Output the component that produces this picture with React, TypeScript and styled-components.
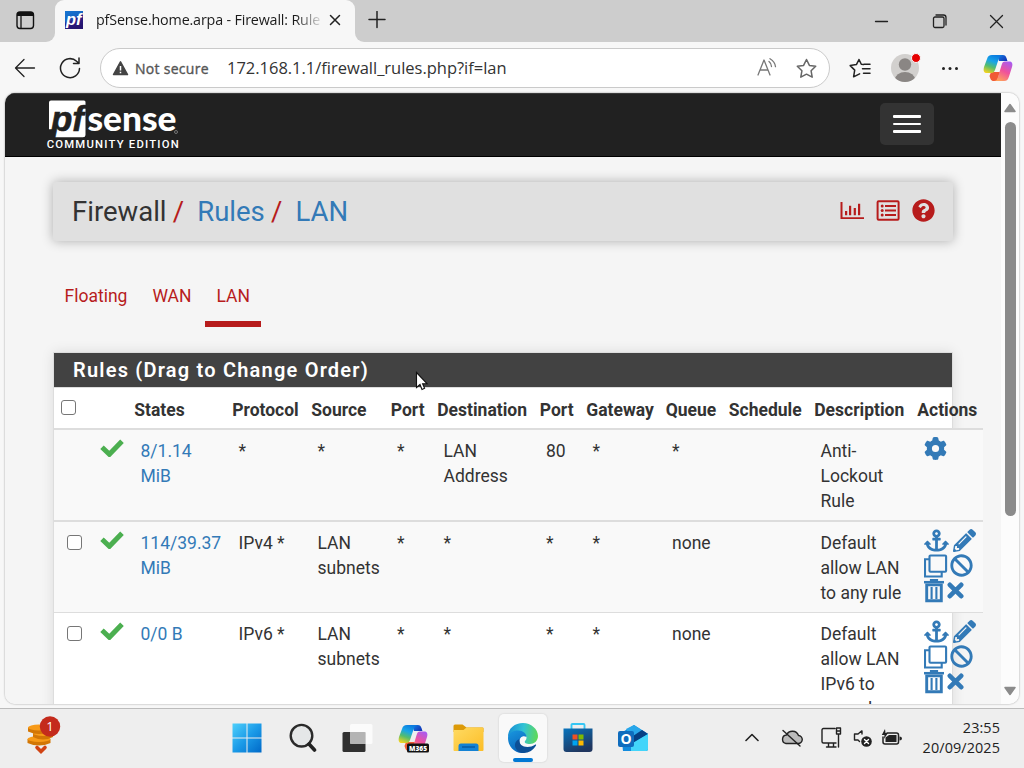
import React from 'react';
import styled, { createGlobalStyle, css } from 'styled-components';
import { FaAnchor, FaBan, FaPencilAlt, FaQuestionCircle } from 'react-icons/fa';
import { FaGear } from 'react-icons/fa6';

const GlobalStyle = createGlobalStyle`
  * { box-sizing: border-box; }
  body { margin: 0; background: #f7f7f7; overflow: hidden; }
`;

const systemFont = css`font-family: 'Open Sans', 'Noto Sans', sans-serif;`;

const Screen = styled.div`
  width: 1024px;
  height: 768px;
  display: flex;
  flex-direction: column;
  overflow: hidden;
  background: #f7f7f7;
  font-family: Roboto, sans-serif;
  color: #212121;
`;

/* ---------- Browser chrome ---------- */

const TabStrip = styled.header`
  flex: none;
  height: 42px;
  display: flex;
  background: #cdcdcd;
  ${systemFont}
`;

const TabMenu = styled.div`
  width: 55px;
  height: 42px;
  padding: 11px 0 0 16px;
  border-bottom-right-radius: 9px;
  background: #cdcdcd;
`;

const TabArea = styled.div<{ $fill?: boolean }>`
  display: flex;
  flex: ${({ $fill }) => ($fill ? '1' : 'none')};
  background: #f7f7f7;
`;

const BrowserTab = styled.div`
  width: 300px;
  height: 42px;
  padding: 0 12px 2px 10px;
  display: flex;
  align-items: center;
  background: #f7f7f7;
  border-radius: 9px 9px 0 0;
`;

const TabCorner = styled.div`
  background: #cdcdcd;
`;

const TabTitle = styled.div`
  width: 224px;
  margin-left: 13px;
  overflow: hidden;
  white-space: nowrap;
  font-size: 14.3px;
  line-height: 20px;
  letter-spacing: -0.16px;
  color: #1b1b1b;
  -webkit-mask-image: linear-gradient(90deg, #000 89%, rgba(0, 0, 0, 0.15) 100%);
  mask-image: linear-gradient(90deg, #000 89%, rgba(0, 0, 0, 0.15) 100%);
`;

const TabSpace = styled.div`
  flex: 1;
  padding: 11px 20px 0 12px;
  display: flex;
  justify-content: space-between;
  background: #cdcdcd;
  border-bottom-left-radius: 9px;
`;

const WindowButtons = styled.div`
  display: flex;
  gap: 42.5px;
  padding-top: 3px;
`;

const Toolbar = styled.div`
  flex: none;
  height: 51px;
  padding: 6px 0 5px 14px;
  display: flex;
  align-items: center;
  ${systemFont}
`;

const ToolIcon = styled.div<{ $gap?: number }>`
  display: flex;
  flex: none;
  margin-left: ${({ $gap = 0 }) => $gap}px;
`;

const AddressBar = styled.div`
  flex: none;
  width: 730px;
  height: 40px;
  margin-left: 19px;
  padding: 0 12px 0 11px;
  display: flex;
  align-items: center;
  background: #fff;
  border: 1px solid #cacaca;
  border-radius: 20px;
`;

const Security = styled.span`
  width: 92px;
  margin-left: 6px;
  white-space: nowrap;
  font-size: 14px;
  letter-spacing: 0.28px;
  -webkit-text-stroke: 0.35px #555;
  color: #555;
`;

const Address = styled.span`
  flex: 1;
  padding-bottom: 2px;
  white-space: nowrap;
  font-size: 16.5px;
  letter-spacing: -0.02px;
  color: #333;
`;

const Avatar = styled.div`
  position: relative;
  display: flex;
  margin-left: 20px;
`;

const AvatarDot = styled.span`
  position: absolute;
  top: -1px;
  right: -2px;
  width: 10px;
  height: 10px;
  border-radius: 50%;
  background: #e60000;
  border: 1px solid #f7f7f7;
`;

/* ---------- Page ---------- */

const Viewport = styled.div`
  flex: none;
  width: 1014px;
  height: 611px;
  margin-left: 5px;
  display: flex;
  overflow: hidden;
  border-radius: 10px;
  background: #fafafa;
  box-shadow: 0 0 2px rgba(0, 0, 0, 0.4);
`;

const Page = styled.main`
  width: 996px;
  height: 611px;
  overflow: hidden;
  background: #f5f5f5;
`;

const ScrollTrack = styled.div`
  width: 18px;
  padding: 10px 3px 8px 3px;
  display: flex;
  flex-direction: column;
  align-items: center;
  background: #fcfcfc;
`;

const ScrollThumb = styled.div`
  width: 11px;
  height: 394px;
  margin: 9px 0 auto;
  border-radius: 6px;
  background: #8b8b8b;
`;

const Navbar = styled.nav`
  height: 64px;
  padding: 5px 67px 0 40px;
  display: flex;
  justify-content: space-between;
  background: #212121;
  border-top: 1px solid #3b3b3b;
  border-bottom: 1px solid #000;
`;

const MenuButton = styled.div`
  width: 54px;
  height: 42px;
  margin-top: 4px;
  display: flex;
  flex-direction: column;
  align-items: center;
  justify-content: center;
  gap: 5px;
  border-radius: 5px;
  background: #333;
`;

const MenuBar = styled.span`
  width: 28px;
  height: 2.6px;
  border-radius: 1px;
  background: #fff;
`;

const Breadcrumb = styled.div`
  width: 900px;
  height: 59px;
  margin: 25px 0 0 48px;
  padding: 0 18px 2px 19px;
  display: flex;
  align-items: center;
  justify-content: space-between;
  background: #e0e0e0;
  border-radius: 3px;
  box-shadow: 0 0 12px rgba(0, 0, 0, 0.3);
`;

const Trail = styled.div`
  display: flex;
  padding-top: 2px;
  font-size: 27.5px;
  line-height: 36px;
`;

const Crumb = styled.span<{ $link?: boolean }>`
  color: ${({ $link }) => ($link ? '#337ab7' : '#333')};
`;

const Slash = styled.span`
  margin: 0 13px 0 6.3px;
  color: #b71c1c;
`;

const PageActions = styled.div`
  display: flex;
  align-items: center;
  gap: 12px;
  color: #b71c1c;
`;

const Tabs = styled.div`
  margin: 38px 0 0 48px;
  display: flex;
`;

const TabLink = styled.div<{ $active?: boolean }>`
  height: 48px;
  padding: 5px 11.5px 0;
  margin-right: 2px;
  border-bottom: 6px solid ${({ $active }) => ($active ? '#b71c1c' : 'transparent')};
  color: #b71c1c;
  font-size: 17.5px;
  line-height: 25px;
`;

const Panel = styled.section`
  width: 900px;
  height: 500px;
  margin: 25px 0 0 48px;
  background: #fff;
  border: 1px solid #ddd;
  box-shadow: 0 0 12px rgba(0, 0, 0, 0.1);
`;

const PanelTitle = styled.h2`
  height: 35px;
  margin: 0;
  padding-left: 19px;
  border-bottom: 1px solid #ddd;
  background: #424242;
  color: #fff;
  font-size: 20px;
  font-weight: 600;
  line-height: 35px;
  letter-spacing: 1.21px;
`;

const rowGrid = css`
  width: 929px;
  display: grid;
  grid-template-columns: 34px 40px 98px 79px 79.5px 46.5px 102.5px 46.5px 79.5px 63px 85.5px 103px 72px;
  font-size: 17.5px;
  line-height: 25px;
`;

const HeadRow = styled.div`
  ${rowGrid}
  height: 42px;
  padding-top: 10px;
  border-bottom: 2px solid #ddd;
  font-weight: 700;
  color: #333;
`;

const HeadCell = styled.div`
  padding-left: 6.25px;
  white-space: nowrap;
`;

const RuleRow = styled.div<{ $shaded?: boolean; $rule: number }>`
  ${rowGrid}
  min-height: ${({ $rule }) => 90 + $rule}px;
  padding-top: 9px;
  background: ${({ $shaded }) => ($shaded ? '#f9f9f9' : 'transparent')};
  border-bottom: ${({ $rule }) => $rule}px solid #ddd;
`;

const Cell = styled.div<{ $link?: boolean }>`
  padding-left: 12.5px;
  color: ${({ $link }) => ($link ? '#337ab7' : '#333')};
`;

const IconCell = styled.div`
  padding-left: 12px;
  color: #4caf50;
`;

const CheckBox = styled.span<{ $head?: boolean }>`
  display: block;
  width: 15px;
  height: 15px;
  margin-top: ${({ $head }) => ($head ? 2 : 4)}px;
  margin-left: ${({ $head }) => ($head ? 0.75 : 0)}px;
  border: 1px solid #767676;
  border-radius: 3px;
  background: #fff;
`;

const ActionList = styled.div`
  padding: 0 0 0 12.5px;
  margin-top: -3px;
  color: #337ab7;
`;

const ActionLine = styled.div<{ $gap: number }>`
  height: 25px;
  display: flex;
  align-items: center;
  gap: ${({ $gap }) => $gap}px;
  white-space: nowrap;
`;

/* ---------- Taskbar ---------- */

const Taskbar = styled.footer`
  flex: none;
  height: 60px;
  margin-top: 4px;
  display: flex;
  align-items: center;
  background: #eee;
  border-top: 1px solid #bcbcbc;
  ${systemFont}
`;

const Widget = styled.div`
  width: 219.5px;
  padding: 0 0 7px 25px;
  display: flex;
`;

const TaskItem = styled.div<{ $active?: boolean }>`
  flex: none;
  width: 48px;
  height: 48px;
  margin: 0 3.6px 1px;
  display: flex;
  align-items: center;
  justify-content: center;
  border-radius: 5px;
  position: relative;
  background: ${({ $active }) => ($active ? '#f9f9f9' : 'transparent')};
  box-shadow: ${({ $active }) => ($active ? '0 0 1px 1px #e2e2e2' : 'none')};
`;

const ActiveMark = styled.span`
  position: absolute;
  left: 14px;
  bottom: 0;
  width: 20px;
  height: 4px;
  border-radius: 2px;
  background: #0078d4;
`;

const Tray = styled.div`
  margin-left: auto;
  padding: 0 24px 2px 0;
  display: flex;
  align-items: center;
`;

const TrayIcon = styled.div<{ $gap?: number }>`
  display: flex;
  margin-left: ${({ $gap = 0 }) => $gap}px;
`;

const Clock = styled.div`
  width: 97px;
  text-align: right;
  font-size: 14.4px;
  line-height: 20px;
  letter-spacing: 0.1px;
  white-space: nowrap;
`;

const Pointer = styled.svg`
  position: absolute;
  left: 415px;
  top: 371px;
`;

/* ---------- Drawings ---------- */

const line = { fill: 'none', stroke: '#222', strokeWidth: 1.3, strokeLinecap: 'round', strokeLinejoin: 'round' } as const;

const CheckIcon = () => (
  <svg width="24" height="18" viewBox="0 0 24 18"><path d="M2 8.2 9.4 15.3 22 2.3" fill="none" stroke="currentColor" strokeWidth="5" /></svg>
);
const ChartIcon = () => (
  <svg width="24" height="19" viewBox="0 0 24 19" fill="currentColor">
    <path d="M.5 1h2v15.2H24V18H.5z" /><path d="M5 10h2.2v4.3H5zM9 4.7h2.2v9.6H9zM13.7 7h2.2v7.3h-2.2zM18 2.7h2.2v11.6H18z" />
  </svg>
);
const ListIcon = () => (
  <svg width="24" height="21" viewBox="0 0 24 21" fill="currentColor">
    <rect x="1.6" y="1.3" width="21" height="18.4" rx="1" fill="none" stroke="currentColor" strokeWidth="2" />
    <circle cx="6.2" cy="6" r="1.5" /><circle cx="6.2" cy="10.5" r="1.5" /><circle cx="6.2" cy="15" r="1.5" />
    <path d="M9 5h11v2H9zM9 9.5h11v2H9zM9 14h11v2H9z" />
  </svg>
);
const CloneIcon = () => (
  <svg width="24" height="24" viewBox="0 0 24 24" fill="none" stroke="currentColor" strokeWidth="2.1">
    <rect x="5.500" y="1.5" width="16.6" height="16.2" rx="1" /><path d="M5 5.200H1V22.500h16.700V18" />
  </svg>
);
const TrashIcon = () => (
  <svg width="20" height="24" viewBox="0 0 20 24" fill="none" stroke="currentColor">
    <path d="M0 3.2h20" strokeWidth="2.5" /><path d="M6.8 2V1h6.4v1" strokeWidth="1.8" />
    <path d="M2.7 5.9h14.600v15.800H2.700z" strokeWidth="2.900" /><path d="M7.600 8v12M12.400 8v12" strokeWidth="2.100" />
  </svg>
);
const CrossIcon = () => (
  <svg width="17" height="17" viewBox="0 0 17 17"><path d="m2.8 2.8 11.4 11.4M14.2 2.8 2.8 14.2" stroke="currentColor" strokeWidth="4.6" strokeLinecap="round" /></svg>
);

const Logo = () => (
  <svg width="140" height="54" viewBox="45 98 140 54" fontFamily="Lato, sans-serif">
    <path d="M51 99.500h33q1.500 0 1.500 1.500V134q0 2.300-2.500 2.300H53l2-8H49V101.500q0-2 2-2z" fill="#fff" />
    <text x="51" y="129.500" fontSize="35" fontWeight="700" fontStyle="italic" fontFamily="Liberation Sans, sans-serif" fill="#212121" stroke="#212121" strokeWidth=".6" textLength="33" lengthAdjust="spacingAndGlyphs">pf</text>
    <text x="87.500" y="129.500" fontSize="35" fontWeight="900" fill="#fff" textLength="89" lengthAdjust="spacingAndGlyphs">sense</text>
    <circle cx="176" cy="131" r="1.500" fill="none" stroke="#aaa" strokeWidth=".6" />
    <text x="46.700" y="147.300" fontSize="11.300" fontWeight="500" fontFamily="Roboto, sans-serif" fill="#fff" textLength="132">COMMUNITY EDITION</text>
  </svg>
);

const Favicon = () => (
  <svg width="18" height="18" viewBox="0 0 18 18">
    <defs><linearGradient id="fav" x1="0" y1="0" x2=".5" y2="1"><stop stopColor="#1676d2" /><stop offset=".45" stopColor="#1767c4" /><stop offset=".6" stopColor="#2a1c86" /><stop offset="1" stopColor="#25146f" /></linearGradient></defs>
    <rect width="18" height="18" fill="url(#fav)" />
    <text x="1" y="14" fontFamily="Liberation Sans, sans-serif" fontWeight="700" fontStyle="italic" fontSize="16" fill="#fff" textLength="15.500" lengthAdjust="spacingAndGlyphs">pf</text>
  </svg>
);

const RibbonIcon = ({ id, label }: { id: string; label?: string }) => (
  <svg width="32" height="30" viewBox="0 0 32 30">
    <defs>
      <linearGradient id={`${id}a`} x1=".6" y1="0" x2=".2" y2="1"><stop stopColor="#0b7be0" /><stop offset=".35" stopColor="#18a5e8" /><stop offset=".65" stopColor="#55bd6c" /><stop offset="1" stopColor="#f4d31f" /></linearGradient>
      <linearGradient id={`${id}b`} x1=".8" y1="0" x2=".3" y2="1"><stop stopColor="#a95bf0" /><stop offset=".5" stopColor="#f0529b" /><stop offset="1" stopColor="#ffa25c" /></linearGradient>
      <linearGradient id={`${id}c`} x1="0" y1="0" x2="1" y2=".6"><stop stopColor="#1483e8" /><stop offset="1" stopColor="#1238b8" /></linearGradient>
    </defs>
    <path d="M15 2h6c3 0 3.500 3 4.500 6H17z" fill={`url(#${id}c)`} />
    <path d="M9 19h9l-3 9h-3c-3 0-3.500-2-4.500-5z" fill="#f15a35" />
    <path d="M10 2h11c-3 0-4 3-5 6l-3 9c-.8 2-1.500 3-3.500 3H5c-3 0-4-2-3-6l3-8c1-3 2-4 5-4z" fill={`url(#${id}a)`} />
    <path d="M22 28H12c3 0 3.600-3 4.600-6l3-10c.7-2.500 1.500-3.500 3.500-3.500H27c3 0 4 2 3 5.500l-3 9.500c-1 3-2 4.500-5 4.500z" fill={`url(#${id}b)`} />
    {label && <><rect x="10" y="20.500" width="22" height="9" rx="1.500" fill="#111" /><text x="12" y="28" fontSize="7.500" fontWeight="800" fontFamily="Open Sans, sans-serif" fill="#fff" textLength="18" lengthAdjust="spacingAndGlyphs">{label}</text></>}
  </svg>
);

const BackIcon = () => <svg width="22" height="22" viewBox="0 0 22 22" {...line}><path d="M20.500 11H2M10 2.500 1.500 11l8.500 8.500" /></svg>;
const ReloadIcon = () => <svg width="22" height="22" viewBox="0 0 22 22" {...line} strokeWidth={1.500}><path d="M20.500 11.500A9.500 9.500 0 1 1 17.600 4.300L20 6.500M20 1v5.500h-5.500" /></svg>;
const starPath = 'm10.500 1.500 2.900 5.900 6.300.9-4.600 4.500 1.100 6.400-5.700-3-5.700 3 1.100-6.400L1.300 8.300l6.300-.9z';
const StarIcon = () => <svg width="21" height="21" viewBox="0 0 21 21" {...line} stroke="#666" strokeWidth={1.500}><path d={starPath} /></svg>;
const FavouritesIcon = () => (
  <svg width="22" height="21" viewBox="0 0 22 21" {...line} strokeWidth={1.500}>
    <path d="M14.500 6.600 12.300 6.300 10 1.500 7.400 6.600 1.200 7.600l4.500 4.500-1.100 6.700 6-3M15 6.300h6M13.500 10.800H21M14.500 15.300H21" />
  </svg>
);
const ReadAloudIcon = () => <svg width="20" height="21" viewBox="0 0 20 21" {...line} stroke="#777"><path d="M1 17 7 2l6 15M3.200 12h7.600M12 3.500q2.500 2 2.500 5M13 .700q5 3 5.500 8" /></svg>;
const PersonIcon = () => (
  <svg width="28" height="28" viewBox="0 0 28 28"><defs><clipPath id="person"><circle cx="14" cy="14" r="14" /></clipPath></defs>
    <circle cx="14" cy="14" r="14" fill="#d2d0ce" /><g fill="#8a8684" clipPath="url(#person)"><circle cx="14" cy="10.500" r="6.200" /><ellipse cx="14" cy="25.500" rx="10" ry="7.500" /></g></svg>
);

const StartIcon = () => (
  <svg width="30" height="30" viewBox="0 0 30 30"><defs><linearGradient id="win" x1="0" y1="0" x2="1" y2="1"><stop stopColor="#4fd0fb" /><stop offset=".5" stopColor="#1b9be8" /><stop offset="1" stopColor="#0069c8" /></linearGradient></defs>
    <path d="M.5.500h14v14H.5zM15.500.500h14v14h-14zM.5 15.500h14v14H.5zM15.500 15.500h14v14h-14z" fill="url(#win)" /></svg>
);
const SearchIcon = () => <svg width="30" height="30" viewBox="0 0 30 30"><circle cx="14.500" cy="12.700" r="10.800" fill="#e5e7e8" stroke="#2a2a2a" strokeWidth="2.400" /><path d="m22 21 5.500 6" stroke="#222" strokeWidth="3.600" strokeLinecap="round" /></svg>;
const TaskViewIcon = () => <svg width="32" height="30" viewBox="0 0 32 30"><rect x="1.500" y="9" width="23" height="20" rx="1.500" fill="#303030" /><rect x="9" y="1" width="22.500" height="20" rx="1.500" fill="#fff" fillOpacity=".75" /><path d="M9 9h15.500v12H9z" fill="#aaa" fillOpacity=".7" /></svg>;
const FolderIcon = () => (
  <svg width="32" height="30" viewBox="0 0 32 30"><defs><linearGradient id="fold" x1="0" y1="0" x2="1" y2="1"><stop stopColor="#ffdb63" /><stop offset="1" stopColor="#fcbd26" /></linearGradient></defs>
    <path d="M1.500 3q0-1.500 1.500-1.500H10.500l4 3h16q1 0 1 1V9h-30z" fill="#dc9a08" /><path d="M1.500 7h10l3-2.500h16q1 0 1 1V27q0 1-1 1h-28q-1 0-1-1z" fill="url(#fold)" /><path d="M6.500 28v-5q0-2.500 2.500-2.500h15q2.500 0 2.500 2.500v5z" fill="#1482d4" /><path d="M10 24h13" stroke="#07559c" strokeWidth="1.300" /></svg>
);
const EdgeIcon = () => (
  <svg width="32" height="32" viewBox="0 0 32 32"><defs>
    <linearGradient id="edgeTop" x1="0" y1=".4" x2="1" y2=".5"><stop stopColor="#188fd4" /><stop offset=".5" stopColor="#31c3d5" /><stop offset="1" stopColor="#60d955" /></linearGradient>
    <linearGradient id="edgeSide" x1="0" y1="0" x2=".5" y2="1"><stop stopColor="#1997df" /><stop offset="1" stopColor="#0a63b9" /></linearGradient></defs>
    <path d="M1 15C1 6 8 1 16 1s15 6 15 13c0 5-4 8-8 8-4 0-6-1-5-3 1-1 1.500-2 1.500-3.500 0-3-3-5.500-7.500-5.500C6.500 10 2 12 1 15z" fill="url(#edgeTop)" />
    <path d="M1 16c0-5 5-7.500 10-7.500 5 0 8.500 3 8.500 6.500-4-2-7 1-7 4 0 6 5 10 11 7-2 3-5 5-8.500 5C7 31 1 24 1 16z" fill="url(#edgeSide)" />
    <path d="M12.500 17c-1 5 3 8 8 8 3 0 5-1 7.500-2.300 1-.4 1.300.2 1 .8C26.500 28 22 31 16.500 31 8 31 4.500 20 12.500 17z" fill="#0c4f96" /></svg>
);
const StoreIcon = () => (
  <svg width="30" height="30" viewBox="0 0 30 30"><defs><linearGradient id="store" x1="0" y1="0" x2=".5" y2="1"><stop stopColor="#0874bd" /><stop offset="1" stopColor="#20365f" /></linearGradient></defs>
    <path d="M8.500 6V2q0-1 1-1h11q1 0 1 1v4" fill="none" stroke="#35c6f4" strokeWidth="1.900" /><path d="M.5 5.500h29V26q0 3-3 3h-23q-3 0-3-3z" fill="url(#store)" />
    <path d="M9.500 11.500h5v5h-5z" fill="#f25022" /><path d="M15.500 11.500h5v5h-5z" fill="#7fba00" /><path d="M9.500 17.500h5v5h-5z" fill="#00a4ef" /><path d="M15.500 17.500h5v5h-5z" fill="#ffb900" /></svg>
);
const MailIcon = () => (
  <svg width="32" height="30" viewBox="0 0 32 30"><path d="m4 10 13-8 14 9v15q0 2-2 2H6z" fill="#128bdd" /><path d="m17 2 14 9-14 8-8-13z" fill="#28a7ea" /><path d="m25 7 6 4-18 11v-7z" fill="#063f83" /><path d="M31 11v15q0 2-2 2H14V21z" fill="#43d5fa" /><rect x="1" y="8" width="16" height="16" rx="2" fill="#0f6cbd" />
    <text x="3.600" y="21" fontSize="14" fontWeight="700" fontFamily="Open Sans, sans-serif" fill="#fff">O</text></svg>
);
const CoinsIcon = () => (
  <svg width="40" height="42" viewBox="0 0 40 42">
    {[[14, 25, 11.500], [18, 19, 10], [14, 13.500, 11]].map(([x, y, r]) => <g key={y}><path d={`M${x - r} ${y}v4q${r} 5 ${r * 2} 0v-4z`} fill="#d27605" /><ellipse cx={x} cy={y} rx={r} ry="3" fill="#f79a18" /></g>)}
    <path d="m12 33.500 4 4 4-4" fill="none" stroke="#d14314" strokeWidth="3.600" strokeLinecap="round" />
    <circle cx="25" cy="12.500" r="10.200" fill="#c42b1c" /><text x="25" y="17.300" fontSize="13" textAnchor="middle" fontFamily="Open Sans, sans-serif" fill="#fff">1</text>
  </svg>
);

const headings = ['', '', 'States', 'Protocol', 'Source', 'Port', 'Destination', 'Port', 'Gateway', 'Queue', 'Schedule', 'Description', 'Actions'];

const rules = [
  { fixed: true, shaded: true, states: ['8/1.14', 'MiB'], cells: ['*', '*', '*', 'LAN Address', '80', '*', '*', ''], description: ['Anti-', 'Lockout', 'Rule'] },
  { fixed: false, shaded: true, states: ['114/39.37', 'MiB'], cells: ['IPv4 *', 'LAN subnets', '*', '*', '*', '*', 'none', ''], description: ['Default', 'allow LAN', 'to any rule'] },
  { fixed: false, shaded: false, states: ['0/0 B'], cells: ['IPv6 *', 'LAN subnets', '*', '*', '*', '*', 'none', ''], description: ['Default', 'allow LAN', 'IPv6 to', 'any rule'] },
];

const Lines = ({ text }: { text: string[] }) => <>{text.map((t) => <div key={t}>{t}</div>)}</>;

const RuleActions = () => (
  <ActionList>
    <ActionLine $gap={4}><FaAnchor size={25} /><FaPencilAlt size={23} /></ActionLine>
    <ActionLine $gap={2.500}><CloneIcon /><FaBan size={23} /></ActionLine>
    <ActionLine $gap={3}><TrashIcon /><CrossIcon /></ActionLine>
  </ActionList>
);

export default function App() {
  return (
    <Screen>
      <GlobalStyle />
      <TabStrip>
        <TabArea>
          <TabMenu><svg width="19" height="19" viewBox="0 0 19 19"><rect x="1" y="1" width="16.500" height="16.500" rx="3" fill="none" stroke="#111" strokeWidth="1.400" /><path d="M1 5V4q0-3 3-3h10.500q3 0 3 3v1z" fill="#111" /><path d="M5 5v12.500" stroke="#111" strokeWidth="1.300" /></svg></TabMenu>
          <TabCorner>
            <BrowserTab>
              <Favicon />
              <TabTitle>pfSense.home.arpa - Firewall: Rules: LAN</TabTitle>
              <ToolIcon $gap={9}><svg width="12" height="12" viewBox="0 0 12 12" {...line} strokeWidth={1.500}><path d="m1.500 1.500 9 9M10.500 1.500l-9 9" /></svg></ToolIcon>
            </BrowserTab>
          </TabCorner>
        </TabArea>
        <TabArea $fill>
          <TabSpace>
            <svg width="20" height="18" viewBox="0 0 20 18" {...line} strokeWidth={1.500}><path d="M10 .5v16M2 8.500h16" /></svg>
            <WindowButtons>
              <svg width="15" height="15" viewBox="0 0 15 15" {...line}><path d="M1.500 7.500h12" /></svg>
              <svg width="15" height="15" viewBox="0 0 15 15" {...line}><rect x="1.500" y="3" width="10.500" height="10.500" rx="1.500" /><path d="M4 1h7.500q2.500 0 2.500 2.500V11" /></svg>
              <svg width="15" height="15" viewBox="0 0 15 15" {...line}><path d="m1.500 1.500 12 12M13.500 1.500l-12 12" /></svg>
            </WindowButtons>
          </TabSpace>
        </TabArea>
      </TabStrip>

      <Toolbar>
        <ToolIcon><BackIcon /></ToolIcon>
        <ToolIcon $gap={23}><ReloadIcon /></ToolIcon>
        <AddressBar>
          <svg width="17" height="16" viewBox="0 0 17 16"><path d="M8.500 1.800 15.500 14.500h-14z" fill="#444" stroke="#444" strokeWidth="1.500" strokeLinejoin="round" /><path d="M8.500 6v4.500M8.500 11.700v1.600" stroke="#fff" strokeWidth="1.500" /></svg>
          <Security>Not secure</Security>
          <Address>172.168.1.1/firewall_rules.php?if=lan</Address>
          <ReadAloudIcon />
          <ToolIcon $gap={19}><StarIcon /></ToolIcon>
        </AddressBar>
        <ToolIcon $gap={19}><FavouritesIcon /></ToolIcon>
        <Avatar><PersonIcon /><AvatarDot /></Avatar>
        <ToolIcon $gap={22}><svg width="18" height="5" viewBox="0 0 18 5" fill="#222"><circle cx="2.500" cy="2.500" r="1.500" /><circle cx="9" cy="2.500" r="1.500" /><circle cx="15.500" cy="2.500" r="1.500" /></svg></ToolIcon>
        <ToolIcon $gap={23}><RibbonIcon id="pilot" /></ToolIcon>
      </Toolbar>

      <Viewport>
        <Page>
          <Navbar>
            <Logo />
            <MenuButton><MenuBar /><MenuBar /><MenuBar /></MenuButton>
          </Navbar>
          <Breadcrumb>
            <Trail>
              <Crumb>Firewall</Crumb><Slash>/</Slash><Crumb $link>Rules</Crumb><Slash>/</Slash><Crumb $link>LAN</Crumb>
            </Trail>
            <PageActions><ChartIcon /><ListIcon /><FaQuestionCircle size={23} /></PageActions>
          </Breadcrumb>
          <Tabs>
            <TabLink>Floating</TabLink>
            <TabLink>WAN</TabLink>
            <TabLink $active>LAN</TabLink>
          </Tabs>
          <Panel>
            <PanelTitle>Rules (Drag to Change Order)</PanelTitle>
            <HeadRow>
              {headings.map((h, i) => <HeadCell key={i}>{i === 0 ? <CheckBox $head /> : h}</HeadCell>)}
            </HeadRow>
            {rules.map((rule, i) => (
              <RuleRow key={i} $shaded={rule.shaded} $rule={i === 0 ? 2 : 1}>
                <Cell>{!rule.fixed && <CheckBox />}</Cell>
                <IconCell><CheckIcon /></IconCell>
                <Cell $link><Lines text={rule.states} /></Cell>
                {rule.cells.map((c, n) => <Cell key={n}>{c}</Cell>)}
                <Cell><Lines text={rule.description} /></Cell>
                {rule.fixed ? <ActionList><ActionLine $gap={0}><FaGear size={23} /></ActionLine></ActionList> : <RuleActions />}
              </RuleRow>
            ))}
          </Panel>
        </Page>
        <ScrollTrack>
          <svg width="12" height="10" viewBox="0 0 12 10"><path d="M6 1.500 11 8.500H1z" fill="#8b8b8b" stroke="#8b8b8b" strokeWidth="1.500" strokeLinejoin="round" /></svg>
          <ScrollThumb />
          <svg width="12" height="10" viewBox="0 0 12 10"><path d="M6 8.500 11 1.500H1z" fill="#8b8b8b" stroke="#8b8b8b" strokeWidth="1.500" strokeLinejoin="round" /></svg>
        </ScrollTrack>
      </Viewport>

      <Taskbar>
        <Widget><CoinsIcon /></Widget>
        <TaskItem><StartIcon /></TaskItem>
        <TaskItem><SearchIcon /></TaskItem>
        <TaskItem><TaskViewIcon /></TaskItem>
        <TaskItem><RibbonIcon id="office" label="M365" /></TaskItem>
        <TaskItem><FolderIcon /></TaskItem>
        <TaskItem $active><EdgeIcon /><ActiveMark /></TaskItem>
        <TaskItem><StoreIcon /></TaskItem>
        <TaskItem><MailIcon /></TaskItem>
        <Tray>
          <TrayIcon><svg width="14" height="9" viewBox="0 0 14 9" {...line} strokeWidth={1.600}><path d="m1 7.500 6-6 6 6" /></svg></TrayIcon>
          <TrayIcon $gap={22}><svg width="22" height="20" viewBox="0 0 22 20" {...line} strokeWidth={1.400}><path d="M5 15.500h12a4 4 0 0 0 .5-8A6.500 6.500 0 0 0 5.500 7a4.300 4.300 0 0 0-.5 8.500z" fill="#bbb" /><path d="m2 2.500 17 15.500" /></svg></TrayIcon>
          <TrayIcon $gap={18}><svg width="22" height="22" viewBox="0 0 22 22" {...line} strokeWidth={1.400}><path d="M14 1.500H2.500Q1 1.500 1 3v11.500Q1 16 2.500 16H15M5.500 20H15M7.500 16v4M12.500 16v4M15.500 1h4v6h-4zM17.500 7v13M15.500 4h4" /></svg></TrayIcon>
          <TrayIcon $gap={10}><svg width="20" height="20" viewBox="0 0 20 20" {...line} strokeWidth={1.400}><path d="M9 3v3M8.500 3 5 6H1.500v6H5l1.500 1.500" /><circle cx="13.500" cy="13.500" r="5.300" fill="#222" stroke="none" /><path d="m11.500 11.500 4 4M15.500 11.500l-4 4" stroke="#fff" /></svg></TrayIcon>
          <TrayIcon $gap={8}><svg width="22" height="20" viewBox="0 0 22 20"><path d="M6 5h9.500Q17.500 5 17.500 7v7q0 2-2 2H4q-2 0-2-2V9" {...line} strokeWidth={1.500} /><path d="M4.500 9.500 8 7h7.500v7H4.500zM18.500 8.500q2.500 0 2.500 2t-2.500 2zM4 1 .8 7h2.700l-.6 4L7 5H4.500z" fill="#222" /></svg></TrayIcon>
          <Clock>23:55<br />20/09/2025</Clock>
        </Tray>
      </Taskbar>
      <Pointer width="14" height="20" viewBox="0 0 14 20"><path d="M1.500 1.500v15l3.500-3 2 5 2.600-1.200-2-4.600H12z" fill="#fff" stroke="#111" strokeWidth="1.100" /></Pointer>
    </Screen>
  );
}
